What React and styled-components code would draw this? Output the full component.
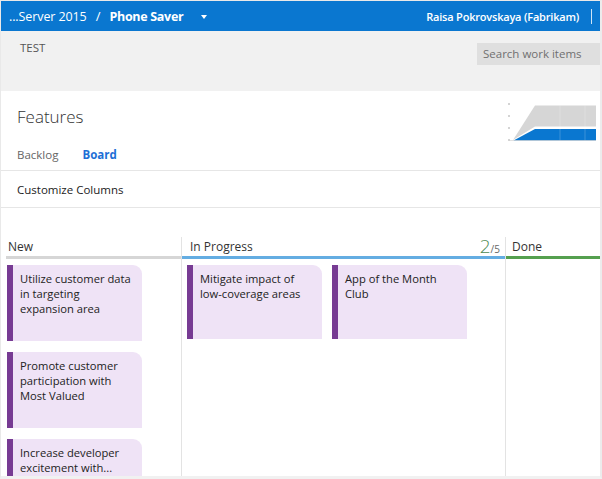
import React from "react";
import styled, { createGlobalStyle } from "styled-components";

const Global = createGlobalStyle`
  html, body { margin: 0; padding: 0; background: #fff; }
  body { font-family: "Open Sans", "Noto Sans", sans-serif; color: #222; }
  * { box-sizing: border-box; }
`;

const Frame = styled.div`
  width: 602px;
  height: 479px;
  overflow: hidden;
  border-top: 1px solid #e9e9e9;
  border-left: 1px solid #e9e9e9;
  border-right: 2px solid #ececec;
  border-bottom: 3px solid #f1f1f1;
  display: flex;
  flex-direction: column;
  background: #fff;
`;

const TopBar = styled.div`
  height: 30px;
  flex: none;
  background: #0a77d0;
  color: #fff;
  display: flex;
  align-items: center;
  padding: 0 8px 0 8px;
`;

const Crumb = styled.span`
  font-size: 12.5px;
  font-weight: ${(p) => (p.$bold ? 700 : 400)};
  letter-spacing: ${(p) => (p.$bold ? "-0.3px" : "-0.1px")};
  white-space: nowrap;
`;

const Slash = styled.span`
  font-size: 13px;
  margin: 0 9px 0 9px;
`;

const Caret = styled.span`
  width: 0;
  height: 0;
  border-left: 3.5px solid transparent;
  border-right: 3.5px solid transparent;
  border-top: 4px solid #fff;
  margin-left: 18px;
  margin-top: 1px;
`;

const Spacer = styled.div`
  flex: 1;
`;

const User = styled.span`
  font-size: 11px;
  font-weight: 600;
  letter-spacing: -0.2px;
  white-space: nowrap;
`;

const UserDivider = styled.span`
  width: 1px;
  height: 15px;
  background: rgba(255, 255, 255, 0.8);
  margin-left: 12px;
  margin-right: 0;
`;

const SubBar = styled.div`
  height: 60px;
  flex: none;
  background: #f1f1f1;
  display: flex;
  justify-content: space-between;
  align-items: flex-start;
  padding-left: 19px;
`;

const Project = styled.span`
  font-size: 11.5px;
  color: #555;
  line-height: 15px;
  margin-top: 9px;
`;

const Search = styled.div`
  margin-top: 12px;
  width: 123px;
  height: 22px;
  background: #dfdfdf;
  color: #707070;
  font-size: 11.5px;
  line-height: 22px;
  padding-left: 6px;
  white-space: nowrap;
`;

const Hub = styled.div`
  flex: none;
  padding-left: 16px;
  border-bottom: 1px solid #e6e6e6;
`;

const TitleRow = styled.div`
  height: 48px;
  display: flex;
  justify-content: space-between;
  align-items: flex-start;
  padding-top: 10px;
  padding-right: 2px;
`;

const Title = styled.h1`
  margin: 0;
  font-size: 17px;
  font-weight: 300;
  line-height: 32px;
  color: #333;
`;

const Chart = styled.svg`
  display: block;
  width: 90px;
  height: 40px;
`;

const Tabs = styled.div`
  height: 31px;
  display: flex;
  align-items: center;
  gap: 24px;
`;

const Tab = styled.span`
  font-size: 11.5px;
  font-weight: ${(p) => (p.$active ? 700 : 400)};
  color: ${(p) => (p.$active ? "#1e6fd6" : "#666")};
`;

const Toolbar = styled.div`
  flex: none;
  height: 37px;
  padding-left: 16px;
  padding-top: 1px;
  display: flex;
  align-items: center;
  font-size: 11.5px;
  color: #222;
  border-bottom: 1px solid #e6e6e6;
`;

const Board = styled.div`
  flex: 1;
  display: flex;
  padding-top: 29px;
  padding-left: 5px;
  min-height: 0;
`;

const Column = styled.div`
  width: ${(p) => p.$w};
  flex: ${(p) => (p.$grow ? 1 : "none")};
  border-left: ${(p) => (p.$divider ? "1px solid #e3e3e3" : "none")};
  display: flex;
  flex-direction: column;
`;

const ColumnHeader = styled.div`
  height: 22px;
  border-bottom: 3px solid ${(p) => p.$color};
  display: flex;
  align-items: flex-start;
  justify-content: space-between;
  padding-left: ${(p) => p.$pad};
  padding-right: 5px;
`;

const ColumnName = styled.span`
  font-size: 12px;
  line-height: 19px;
  color: #333;
`;

const Limit = styled.span`
  color: #4f8b52;
  line-height: 19px;
  white-space: nowrap;
`;

const LimitNum = styled.span`
  font-size: 19px;
  font-weight: 300;
`;

const LimitMax = styled.span`
  font-size: 10px;
  color: #666;
`;

const Cards = styled.div`
  display: flex;
  flex-direction: ${(p) => (p.$row ? "row" : "column")};
  align-items: flex-start;
  gap: ${(p) => (p.$row ? "10px" : "11px")};
  padding-top: 6px;
  padding-left: ${(p) => p.$pad};
`;

const Card = styled.div`
  width: 135px;
  height: ${(p) => p.$h}px;
  flex: none;
  background: #efe3f6;
  border-left: 6px solid #773b93;
  border-radius: 0 9px 0 0;
  padding: 6px 4px 0 7px;
  font-size: 11.2px;
  line-height: 15px;
  color: #222;
  white-space: pre-line;
`;

const cardsNew = [
  { t: "Utilize customer data\nin targeting\nexpansion area", h: 76 },
  { t: "Promote customer\nparticipation with\nMost Valued", h: 76 },
  { t: "Increase developer\nexcitement with...", h: 76 },
];

const cardsProgress = [
  { t: "Mitigate impact of\nlow-coverage areas", h: 74 },
  { t: "App of the Month\nClub", h: 74 },
];

function Cfd() {
  return (
    <Chart viewBox="0 0 90 40">
      <rect x="0.5" y="2.5" width="1" height="1" fill="#555" />
      <rect x="0.5" y="14.5" width="1" height="1" fill="#555" />
      <rect x="0.5" y="26.5" width="1" height="1" fill="#555" />
      <rect x="0.5" y="38.5" width="1" height="1" fill="#555" />
      <polygon points="5,39 27,4.5 88,4.5 88,25.5 27,25.5" fill="#d6d6d6" />
      <polygon points="5.5,39.5 27,28 88,28 88,39.5" fill="#0a77d0" />
      <line x1="52" y1="4.5" x2="52" y2="39.5" stroke="#ffffff" strokeOpacity="0.35" strokeWidth="0.6" />
      <line x1="77" y1="4.5" x2="77" y2="39.5" stroke="#ffffff" strokeOpacity="0.35" strokeWidth="0.6" />
      <line x1="1" y1="39.5" x2="88" y2="39.5" stroke="#cfcfcf" strokeWidth="0.6" />
    </Chart>
  );
}

export default function App() {
  return (
    <>
      <Global />
      <Frame>
        <TopBar>
          <Crumb>...Server 2015</Crumb>
          <Slash>/</Slash>
          <Crumb $bold>Phone Saver</Crumb>
          <Caret />
          <Spacer />
          <User>Raisa Pokrovskaya (Fabrikam)</User>
          <UserDivider />
        </TopBar>
        <SubBar>
          <Project>TEST</Project>
          <Search>Search work items</Search>
        </SubBar>
        <Hub>
          <TitleRow>
            <Title>Features</Title>
            <Cfd />
          </TitleRow>
          <Tabs>
            <Tab>Backlog</Tab>
            <Tab $active>Board</Tab>
          </Tabs>
        </Hub>
        <Toolbar>Customize Columns</Toolbar>
        <Board>
          <Column $w="175px">
            <ColumnHeader $color="#d6d6d6" $pad="2px">
              <ColumnName>New</ColumnName>
            </ColumnHeader>
            <Cards $pad="1px">
              {cardsNew.map((c) => (
                <Card key={c.t} $h={c.h}>{c.t}</Card>
              ))}
            </Cards>
          </Column>
          <Column $w="324px" $divider>
            <ColumnHeader $color="#64ade2" $pad="8px">
              <ColumnName>In Progress</ColumnName>
              <Limit>
                <LimitNum>2</LimitNum>
                <LimitMax>/5</LimitMax>
              </Limit>
            </ColumnHeader>
            <Cards $row $pad="5px">
              {cardsProgress.map((c) => (
                <Card key={c.t} $h={c.h}>{c.t}</Card>
              ))}
            </Cards>
          </Column>
          <Column $grow $divider>
            <ColumnHeader $color="#55a04f" $pad="6px">
              <ColumnName>Done</ColumnName>
            </ColumnHeader>
          </Column>
        </Board>
      </Frame>
    </>
  );
}
